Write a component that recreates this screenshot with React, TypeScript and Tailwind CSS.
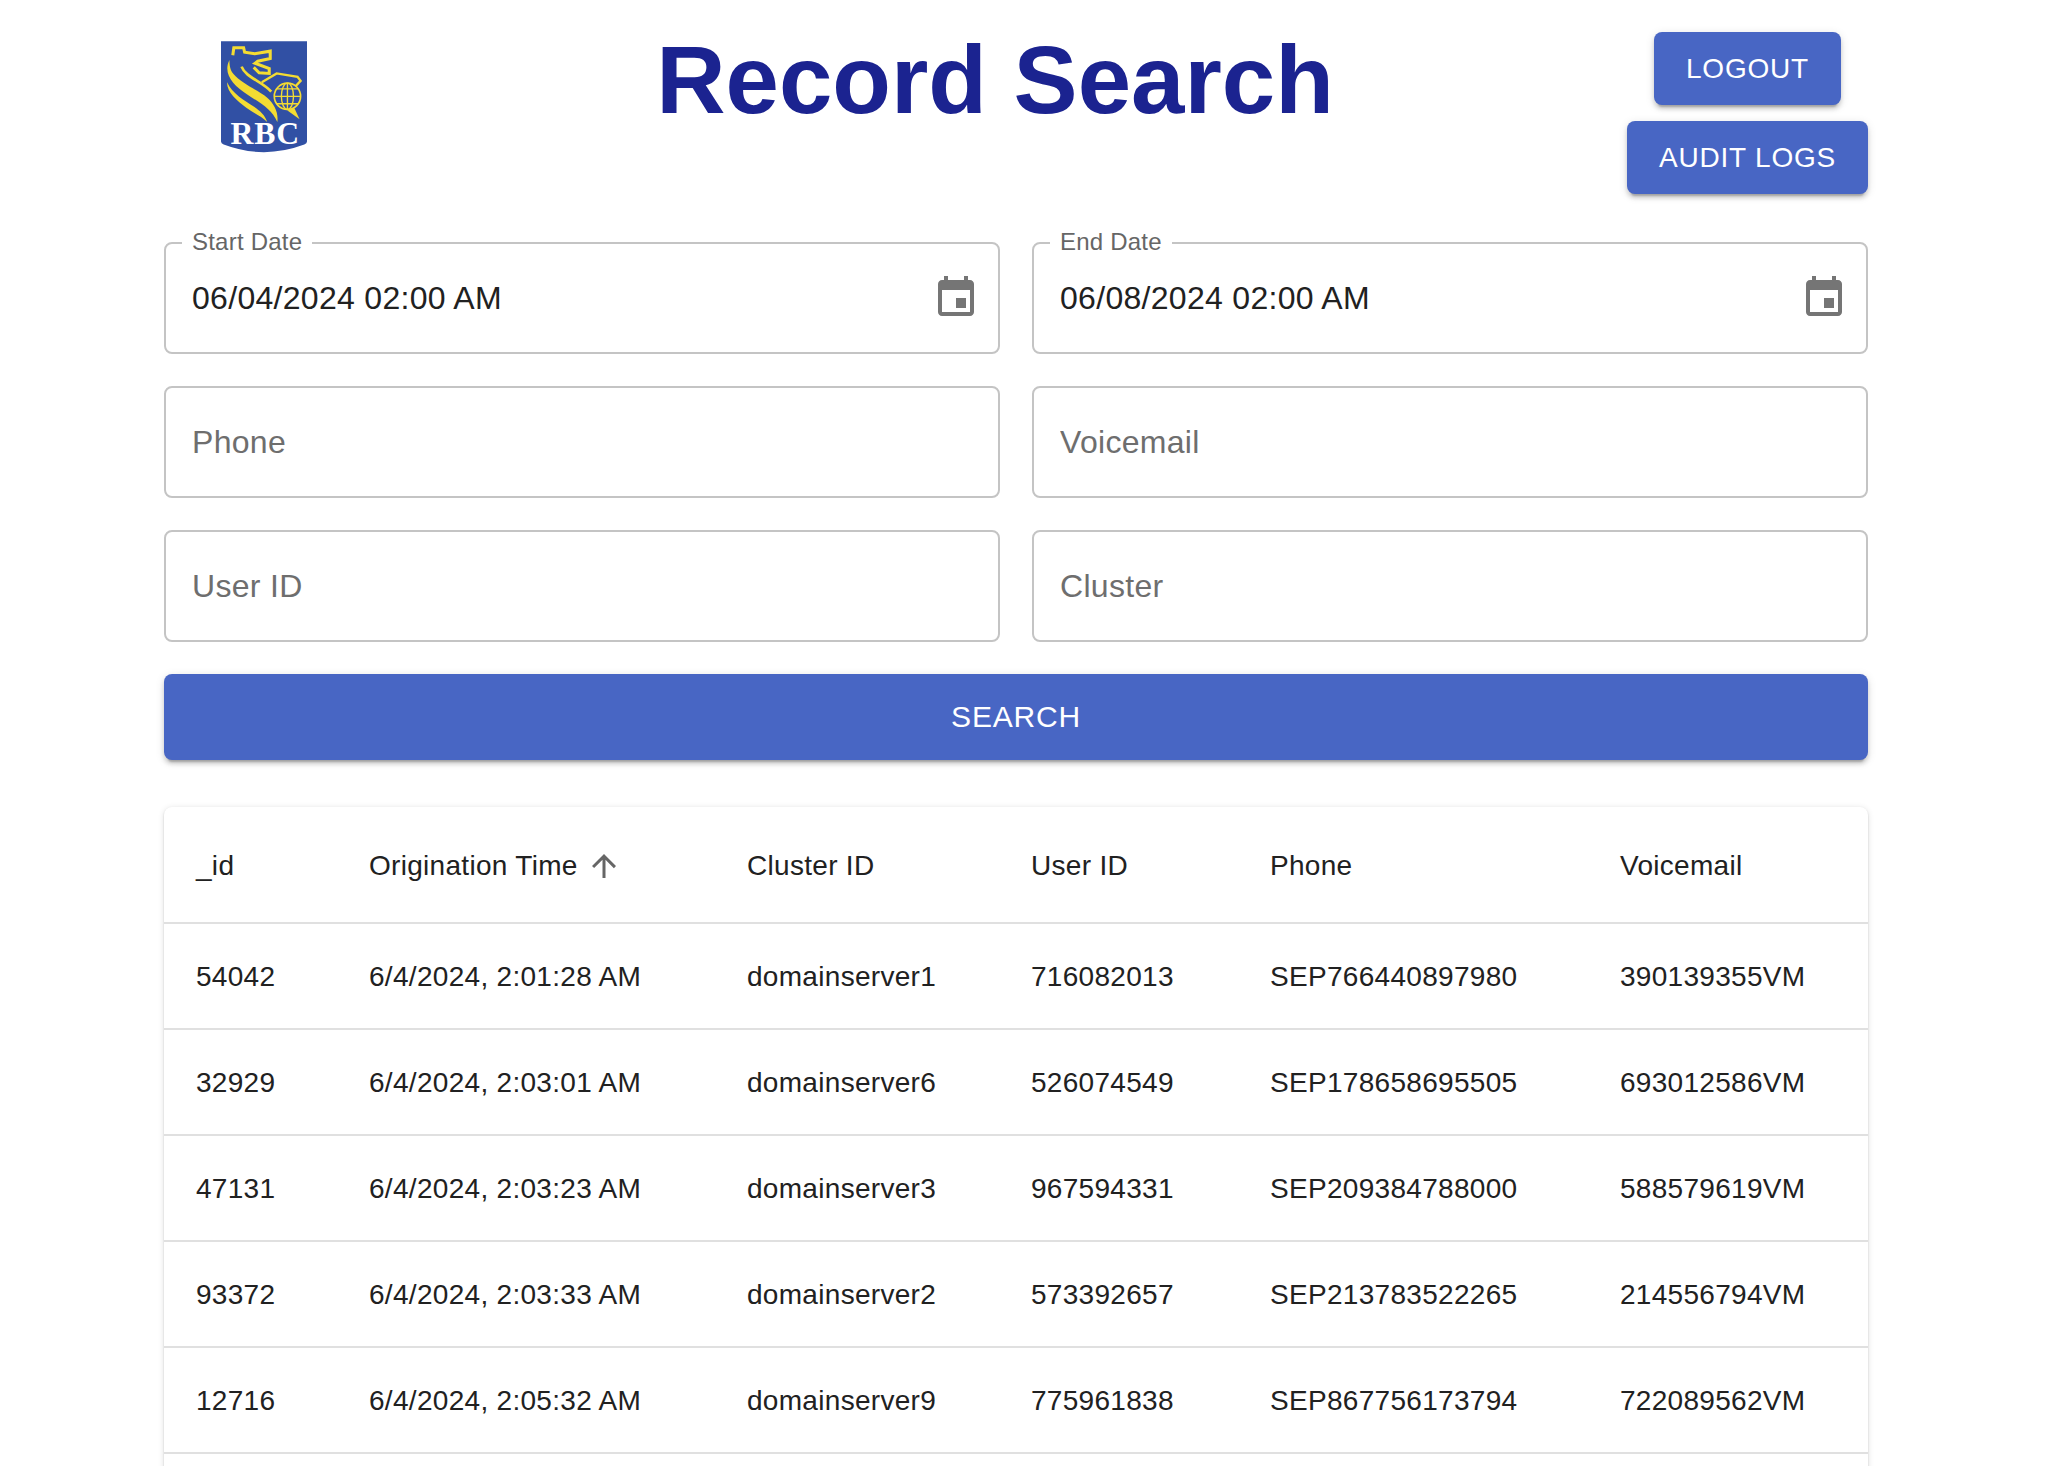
import React from 'react';

const ROWS = [
  ['54042', '6/4/2024, 2:01:28 AM', 'domainserver1', '716082013', 'SEP766440897980', '390139355VM'],
  ['32929', '6/4/2024, 2:03:01 AM', 'domainserver6', '526074549', 'SEP178658695505', '693012586VM'],
  ['47131', '6/4/2024, 2:03:23 AM', 'domainserver3', '967594331', 'SEP209384788000', '588579619VM'],
  ['93372', '6/4/2024, 2:03:33 AM', 'domainserver2', '573392657', 'SEP213783522265', '214556794VM'],
  ['12716', '6/4/2024, 2:05:32 AM', 'domainserver9', '775961838', 'SEP867756173794', '722089562VM'],
];

const buttonClass =
  'bg-[#4866c4] text-white leading-[41px] tracking-[0.8px] rounded-[8px] uppercase shadow-[0_6px_2px_-4px_rgba(0,0,0,0.2),0_4px_4px_0_rgba(0,0,0,0.14),0_2px_10px_0_rgba(0,0,0,0.12)]';

const RbcLogo = () => (
  <svg width="86" height="112" viewBox="125 65 255 330" className="block">
    <path d="M125 65H380V362Q380 368 372 371Q252 416 133 371Q125 368 125 362Z" fill="#3150a4" />
    <g fill="none" stroke="#f4dc32" strokeWidth="9" strokeLinejoin="miter">
      <path d="M160 106L163 84H192L195 97L225 102L271 94V116L234 124L226 130L268 146V160L238 158L222 142" />
      <path d="M186 140C198 172 245 182 274 214" strokeWidth="8" />
      <path d="M246 186L290 160L352 170L361 182L346 198" strokeWidth="7" />
      <circle cx="322" cy="228" r="39" strokeWidth="5" />
      <ellipse cx="322" cy="228" rx="18" ry="39" strokeWidth="4" />
      <path d="M283 228H361M290 206H354M290 250H354M322 189V267" strokeWidth="4" />
    </g>
    <path d="M150 120C130 160 160 195 205 224C245 250 276 268 292 304C296 274 282 250 262 232C232 208 185 190 162 162C152 150 150 135 150 120Z" fill="#f4dc32" />
    <path d="M143 186C142 216 172 240 200 262C222 278 246 288 262 304C256 284 240 270 222 258C195 240 158 220 143 186Z" fill="#f4dc32" />
    <path d="M322 270L358 296L342 262Z" fill="#f4dc32" />
    <text x="255" y="368" textAnchor="middle" fill="#ffffff" fontSize="94" fontWeight="700" fontFamily="'Liberation Serif', serif" textLength="204">RBC</text>
  </svg>
);

const EventIcon = () => (
  <svg width="48" height="48" viewBox="0 0 24 24" fill="#757575" className="shrink-0">
    <path d="M17 12h-5v5h5v-5zM16 1v2H8V1H6v2H5c-1.11 0-1.99.9-1.99 2L3 19c0 1.1.89 2 2 2h14c1.1 0 2-.9 2-2V5c0-1.1-.9-2-2-2h-1V1h-2zm3 18H5V8h14v11z" />
  </svg>
);

const DateField = ({ label, value }: { label: string; value: string }) => (
  <div className="relative h-[112px] border-2 border-[#c4c4c4] rounded-[8px] flex items-center pl-[26px] pr-[18px]">
    <span className="absolute left-[16px] top-[-16px] bg-white px-[10px] text-[24px] leading-[28px] tracking-[0.22px] text-[#666666]">
      {label}
    </span>
    <input
      readOnly
      value={value}
      className="flex-1 min-w-0 outline-none bg-transparent text-[32px] leading-[44px] tracking-[0.3px] text-[#212121]"
    />
    <EventIcon />
  </div>
);

const TextField = ({ placeholder }: { placeholder: string }) => (
  <div className="h-[112px] border-2 border-[#c4c4c4] rounded-[8px] flex items-center px-[26px]">
    <input
      placeholder={placeholder}
      className="w-full outline-none bg-transparent text-[32px] leading-[44px] tracking-[0.3px] text-[#212121] placeholder:text-[#6e6e6e] placeholder:opacity-100"
    />
  </div>
);

export default function App() {
  return (
    <div className="h-[1466px] overflow-hidden bg-white font-['Liberation_Sans',Arial,sans-serif]">
      <div className="ml-[164px] w-[1704px]">
        {/* Header */}
        <div className="flex h-[242px]">
          <div className="pl-[57px] pt-[41px]">
            <RbcLogo />
          </div>
          <div className="flex-1 pl-[56px] text-center">
            <h1 className="text-[96px] leading-[110px] pt-[25px] font-bold text-[#1b2390]">Record Search</h1>
          </div>
          <div className="w-[241px] pt-[32px] flex flex-col items-center gap-[16px]">
            <button className={`${buttonClass} text-[28px] h-[73px] w-[187px]`}>Logout</button>
            <button className={`${buttonClass} text-[28px] h-[73px] w-[241px]`}>Audit Logs</button>
          </div>
        </div>

        {/* Search form */}
        <div className="grid grid-cols-2 gap-x-[32px] gap-y-[32px]">
          <DateField label="Start Date" value="06/04/2024 02:00 AM" />
          <DateField label="End Date" value="06/08/2024 02:00 AM" />
          <TextField placeholder="Phone" />
          <TextField placeholder="Voicemail" />
          <TextField placeholder="User ID" />
          <TextField placeholder="Cluster" />
        </div>

        <button className={`${buttonClass} text-[30px] pb-[2px] mt-[32px] w-full h-[86px] block`}>Search</button>

        {/* Results */}
        <div className="mt-[47px] rounded-[8px] bg-white shadow-[0_2px_2px_-1px_rgba(0,0,0,0.2),0_1px_2px_0_rgba(0,0,0,0.14),0_1px_6px_0_rgba(0,0,0,0.12)]">
          <table className="w-full table-fixed border-collapse text-[28px] tracking-[0.3px] text-[#212121]">
            <colgroup>
              <col className="w-[173px]" />
              <col className="w-[378px]" />
              <col className="w-[284px]" />
              <col className="w-[239px]" />
              <col className="w-[350px]" />
              <col className="w-[280px]" />
            </colgroup>
            <thead>
              <tr className="h-[116px] border-b-2 border-[#e0e0e0]">
                <th className="pl-[32px] pt-[3px] text-left font-normal">_id</th>
                <th className="pl-[32px] pt-[3px] text-left font-normal">
                  <span className="inline-flex items-center gap-[8px]">
                    Origination Time
                    <svg width="36" height="36" viewBox="0 0 24 24" fill="#666666">
                      <path d="M4 12l1.41 1.41L11 7.83V20h2V7.83l5.58 5.59L20 12l-8-8-8 8z" />
                    </svg>
                  </span>
                </th>
                <th className="pl-[32px] pt-[3px] text-left font-normal">Cluster ID</th>
                <th className="pl-[32px] pt-[3px] text-left font-normal">User ID</th>
                <th className="pl-[32px] pt-[3px] text-left font-normal">Phone</th>
                <th className="pl-[32px] pt-[3px] text-left font-normal">Voicemail</th>
              </tr>
            </thead>
            <tbody>
              {ROWS.map((row) => (
                <tr key={row[0]} className="h-[106px] border-b-2 border-[#e0e0e0]">
                  {row.map((cell, i) => (
                    <td key={i} className="pl-[32px] pt-[2px] whitespace-nowrap">
                      {cell}
                    </td>
                  ))}
                </tr>
              ))}
              <tr className="h-[106px]">
                <td colSpan={6} />
              </tr>
            </tbody>
          </table>
        </div>
      </div>
    </div>
  );
}
